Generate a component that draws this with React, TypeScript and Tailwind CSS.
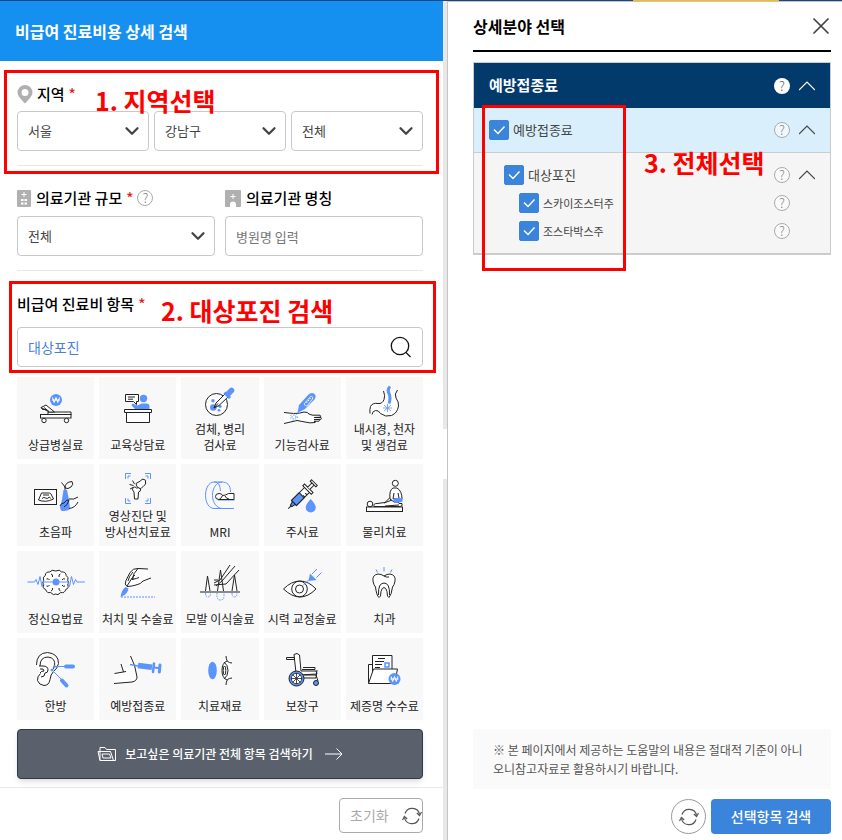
import React from "react";
import { ChevronDown, X } from "lucide-react";

const BLUE = "#5b93ff";

const NOTICE =
  "※ 본 페이지에서 제공하는 도움말의 내용은 절대적 기준이 아니오니참고자료로 활용하시기 바랍니다.";

const Won = ({ x, y }: { x: number; y: number }) => (
  <>
    <circle cx={x} cy={y} r="6" fill={BLUE} stroke="none" />
    <path
      d={`M${x - 3.5} ${y - 2.5}l1.700 5 1.800-5 1.800 5 1.700-5M${x - 4} ${y}h8`}
      stroke="#fff"
      strokeWidth="1"
    />
  </>
);

const items: { lines: string[]; icon: React.ReactNode }[] = [
  {
    lines: ["상급병실료"],
    icon: (
      <>
        <Won x={39} y={23} />
        <path d="M31 35h23v3H31z" fill="#fff" />
        <rect x="23.5" y="37.5" width="30.5" height="3.5" fill="#fff" />
        <path d="M24 30.5l5-2.5 8.500 7H32z" fill="#fff" />
        <path d="M24 30.500l1.500 2H30M27 30.500l5 4" />
        <circle cx="27" cy="43.5" r="2.200" fill="#fff" />
        <circle cx="49.5" cy="43.5" r="2.200" fill="#fff" />
      </>
    ),
  },
  {
    lines: ["교육상담료"],
    icon: (
      <>
        <path d="M26.5 17.5h13v7h-2v3l-3-3h-8z" fill="#fff" />
        <path d="M29 20h7M29 22.200h5" />
        <g fill={BLUE} stroke="none">
          <circle cx="44.5" cy="21.5" r="3.700" />
          <path d="M32.5 28l1-1.500 5 2 4-2h5q3 0 3 3v3.500H37l-3-3z" />
        </g>
        <path d="M25.5 32.500h27v3h-27zM27.5 35.500h23v10h-23z" fill="#fff" />
      </>
    ),
  },
  {
    lines: ["검체, 병리", "검사료"],
    icon: (
      <>
        <circle cx="35.5" cy="27.5" r="11" fill="#fff" />
        <g fill={BLUE} stroke="none">
          <circle cx="32" cy="23.7" r="1.700" />
          <circle cx="32.3" cy="30.5" r="3.300" />
          <circle cx="39" cy="29.3" r="1.600" />
          <circle cx="38" cy="33.3" r="1.400" />
        </g>
        <path d="M33 31l2-5 9.500-9.500 3 3L38 28.500z" fill="#fff" />
        <path d="M33 31l4-4.500" />
        <path d="M43.5 15.500l5.500 5.500" stroke={BLUE} strokeWidth="3" />
        <path d="M47 17l3.500-3.500" stroke={BLUE} strokeWidth="5.500" strokeLinecap="round" />
      </>
    ),
  },
  {
    lines: ["기능검사료"],
    icon: (
      <>
        <path d="M20 35.500l17 .5 7-1 5 3.500h7q1.500 1 0 2l-1 1.500 1 1-2 2-9 1.500-6-2-7-1-12 2.500z" fill="#fff" stroke="none" />
        <path d="M20 35.500l10 1q6 0 10-1.500 4 0 5 2 2 1 4 1.200h7q1.500 1 0 2l-6 .3h7q1 1 0 1.800l-7 .2h5q1 1 0 1.700h-5q3 .5 1 1.300-5 1-10-.5l-8-1.500-13 3" />
        <path d="M33.5 36l1.500-8 9-10q3-3 6-1.500 3 2 .5 6L41 32z" fill={BLUE} stroke="none" />
        <path d="M40.500 26.500l6-7q1.500-.5 2 .5t0 2l-5 6.500q-1 .5-2.200 0t-.8-2z" stroke="#fff" strokeWidth=".8" />
        <path d="M42.500 26l4.500-5.500" stroke="#fff" strokeWidth="1" strokeDasharray="1.500 1" />
        <circle cx="30" cy="40" r="2" stroke={BLUE} strokeDasharray="1.500 1" />
        <circle cx="30" cy="40" r="3.500" stroke={BLUE} strokeDasharray="1 2" />
      </>
    ),
  },
  {
    lines: ["내시경, 천자", "및 생검료"],
    icon: (
      <>
        <path d="M38 14.500q1.500 5 0 8.500-1.500 4-6 4-6-1-7.500 3-1 3-.5 7h4q0-4 4-3.500 2 0 3 3 5 5 11 2 6-3 6.500-10 0-4-2-7.500-3-4 1.500-9" fill="#fff" stroke="none" />
        <path d="M37.5 14q2 5 .5 8.500-1.500 4.500-6 4-5.500-1-7.500 3-1 3-.5 7M51.500 13q-3.500 4-1.500 8 3 4 2.500 8-1 7-7 9.500-6 2-11-2-2-3.500-5-3t-3.500 4" />
        <path d="M44 9.500q-3 3-1 7 2 4 0 10" stroke={BLUE} strokeWidth="3" />
        <path d="M41.500 27v8M38 28l7 6M45 28l-7 6M37 31h9" stroke={BLUE} strokeWidth=".8" />
      </>
    ),
  },
  {
    lines: ["초음파"],
    icon: (
      <>
        <rect x="17.5" y="25.5" width="22" height="15" fill="#fff" />
        <path d="M24.5 29h8q1 0 1.500 1l2.500 5q-8 4-15 1zM25 34.500q2-2 3.500-.5t4-1l1 1.500M26 31h6" />
        <path d="M46.500 26h3.500l2 10 1 9q-4 3-9 1.500l-1-3 2-8z" fill={BLUE} stroke="none" />
        <path d="M48 26v-3q-3-4-3.500-4.500M48 24q0-6 7-6.500 2 3-1 5.500t-6 1" />
        <path d="M61 33q-4 3-9 2M61 38q-3 6-9 6.500M43 42q1-3 4-3 3-4 5-3-1 5-5 7" />
      </>
    ),
  },
  {
    lines: ["영상진단 및", "방사선치료료"],
    icon: (
      <>
        <path d="M26.5 15V9.500H32M46 9.500h5.500V15M26.500 34v5.500H32M46 39.500h5.500V34M29 14.500v-2.500h2.500M46.500 12H49v2.500M29 34.500V37h2.500M46.500 37H49v-2.500" stroke={BLUE} />
        <path d="M37 19.500l4.500-2.500q1.500-3 3.500-1.500 2.500.500 1.500 2.500 1 2.500-1.500 3.500l-3 3q-4 .5-5-5z" fill="#fff" />
        <path d="M34 23.500q2-1.500 3.500.5 2.500-1 4 1 .5 2.500-2 3l-.5 7h-3.500l-.5-7q-2.500-2-1-4.500z" fill="#fff" />
        <path d="M30.500 20.500l4 1M33.500 16.500l2 3.500M31 25l3-1.500" />
      </>
    ),
  },
  {
    lines: ["MRI"],
    icon: (
      <>
        <path d="M53 44.500H33c-5 0-8.500-6-8.500-13.200S28 18 33 18h8c5 0 8.500 3 8.500 10M41 18c-5.500 0-9.500 6-9.500 13.300S36 44.500 41 44.500M33 18c5 0 6 4 6.500 9M37 36h16.500" stroke={BLUE} />
        <path d="M53 29.500v6H38q-3.500 0-3.500-3t3.500-3q3 0 3.500 2l3-.5 3-1.500z" fill="#fff" />
        <path d="M41.500 31.500q-1 3-3 3.500M44 32q1 2.500 4 3" />
      </>
    ),
  },
  {
    lines: ["주사료"],
    icon: (
      <>
        <g transform="translate(37 32) rotate(45)">
          <path d="M0 10v8" />
          <rect x="-3.5" y="-9" width="7" height="19" fill="#fff" />
          <rect x="-3.5" y="-1" width="7" height="11" fill={BLUE} />
          <path d="M-2 10h4l-1 4h-2z" fill={BLUE} />
          <rect x="-6" y="-11" width="12" height="2.500" fill="#fff" />
          <path d="M-1.500-11v-6h3v6M-4-19h8v2h-8z" fill="#fff" />
          <path d="M1-5h2.500M1-2h2.500" />
        </g>
        <path d="M46.700 35q5 5.500 5 8.500a5 5 0 0 1-10 0q0-3 5-8.500z" fill={BLUE} stroke="none" />
      </>
    ),
  },
  {
    lines: ["물리치료"],
    icon: (
      <>
        <rect x="20.5" y="43" width="36" height="4.500" fill="#fff" />
        <path d="M28 42.500q-1-3 3-3l8-1 5-5h5l4 6h3q1 3-2 3z" fill="#fff" />
        <circle cx="24" cy="40" r="2.800" fill="#fff" />
        <path d="M44 35q-1-9 3-11h4q5 3 5 11l-3 3h-5z" fill="#fff" />
        <path d="M47 34h9.500v3.500q-4 2-9 0z" fill={BLUE} stroke="none" />
        <path d="M47 35l1-6M52 29l1 5M38 39l8-3M39 42l14-1" />
        <circle cx="49.3" cy="19.3" r="3" fill="#fff" />
      </>
    ),
  },
  {
    lines: ["정신요법료"],
    icon: (
      <>
        <path d="M38.700 20q-4-2-6 1-4-.5-4.500 3.500-3 2-1.500 5-2 2 0 4-1.500 4 2 5 1 4 5 3 3 3.500 5 1.500 2 2 5-1.500 4 1 5-3 3.500-1 2-5 2-2 0-4 1.500-3-1.500-5-.5-4-4.500-3.500-2-3-6-1z" fill="#fff" />
        <path d="M34 23q2 0 1.500 3M43.500 23q-2 0-1.500 3M34 40q2-.5 1.500-3M43.500 40q-2-.5-1.500-3M29.500 28q2-1 3 1M48 28q-2-1-3 1M29.500 35q2 1 3-1M48 35q-2 1-3-1" />
        <path d="M10.500 31h7l1.500-2.500 2 5 2-8 2 10 1.500-4.500h24.500l1.500 4.500 2-10 2 8 2-5 1.500 2.500H68" stroke={BLUE} />
        <circle cx="39" cy="31" r="3.500" fill={BLUE} stroke="none" />
      </>
    ),
  },
  {
    lines: ["처치 및 수술료"],
    icon: (
      <>
        <path d="M29 35q-3 0-3-4l5-9q3-4 6-4l12 2 3 9-9 2q-3 4-9 4.500z" fill="#fff" stroke="none" />
        <path d="M49 18l-10-.5q-5-.5-8 4l-4 8q-2 4 1 6 4 0 9-1.500 5-1 7-4l8-3M39 17.500q-5 5-6 11 5-1 7-2M34 21q-4 4-5 9M36 24q-3 1-2 5M28 35l5-8" />
        <path d="M21.500 46q1-7 5-10l3 1.500q-1 5-5 7z" fill={BLUE} stroke="none" />
        <path d="M22 46h34" stroke={BLUE} strokeDasharray="2 1" />
      </>
    ),
  },
  {
    lines: ["모발 이식술료"],
    icon: (
      <>
        <path d="M24.500 40l2-15 2.500 15M36.500 40l3-21 3 21M51 40l2.500-16 2.500 16" fill="#fff" />
        <path d="M49 14L39 29l-6 3M54 15L41 30l-6 5M58 19L45 33l-12 1M33 29h4" />
        <path d="M19 41h40" stroke="#666" strokeWidth="1.500" />
        <path d="M24.500 42q0 4 2.500 4t2.500-4M36 42v3q0 4 3.500 4t3.500-4v-3M51 42q0 4 2.500 4t2.500-4" stroke={BLUE} strokeDasharray="1.500 1" />
      </>
    ),
  },
  {
    lines: ["시력 교정술료"],
    icon: (
      <>
        <path d="M19.500 38q8-8 16.500-8t16 8q-8 8-16 8t-16.500-8z" fill="#fff" />
        <circle cx="35.5" cy="38" r="7.800" />
        <circle cx="35.5" cy="38" r="4" />
        <path d="M39 34.500l6-6M48 23l5-5M52.500 26.500l5-5" stroke={BLUE} />
        <path d="M46 22.500l6.500 6.500-8 1z" fill={BLUE} stroke="none" />
      </>
    ),
  },
  {
    lines: ["치과"],
    icon: (
      <>
        <path d="M38 25q3-2 6-2 6 1 5 7-.5 4-2.500 6-1 8-3.500 10.500-2 0-2-6-1-4-3-4t-3 4q0 6-2 6-2.500-2-3.500-10.500-2-2-2.500-6-1-6 5-7 3 0 6 2z" fill="#fff" />
        <path d="M38 25q2 1.500 5 1M32.500 44q-.5-12 5.500-12t5.500 12" />
        <path d="M38 16v4.500M30 18.500l1.500 3M46 18.500l-1.500 3" stroke={BLUE} />
      </>
    ),
  },
  {
    lines: ["한방"],
    icon: (
      <>
        <path d="M19.500 27q0-12 11-12.500 11 1 11 11-1 5-5 8-3 3-3.500 8-1 6-6 6-5-.5-6.500-5-.5-4 3-7" fill="#fff" />
        <path d="M23 28q0-9 8-9 8 1 6.500 9-1 3-3 5M22 28h4q5 0 5 4 0 3-3 3 0 4-4 4M23 31q4-1 4 2-3 0-4 2" />
        <g stroke={BLUE} fill={BLUE}>
          <circle cx="37.5" cy="28.5" r="1" />
          <circle cx="35" cy="32" r="1" />
          <path d="M38 28.500h10M35 32l9 9" />
          <path d="M49 28.500h7" strokeWidth="4" strokeLinecap="round" />
          <path d="M45 42.500l4.500 5" strokeWidth="4" strokeLinecap="round" />
        </g>
      </>
    ),
  },
  {
    lines: ["예방접종료"],
    icon: (
      <>
        <path d="M31.500 18q5 9 6.500 21 0 4-5 5l-18 1.500V36l12-2z" fill="#fff" stroke="none" />
        <path d="M31.500 18q5 9 6.500 21 0 4-5 5l-18 1.500M15.500 35.500l11.500-2M22 26l2.500 8" />
        <g stroke={BLUE}>
          <path d="M31 26.500l8 1.500" strokeWidth="1.500" />
          <path d="M39 27.500l14 1.800" strokeWidth="5.500" />
          <path d="M55 25.500l-1 8.500" strokeWidth="2.500" strokeLinecap="round" />
          <path d="M55 29.500l6 .7" strokeWidth="2" />
          <path d="M61 27l-.7 7" strokeWidth="3" strokeLinecap="round" />
        </g>
      </>
    ),
  },
  {
    lines: ["치료재료"],
    icon: (
      <>
        <ellipse cx="31.5" cy="32.5" rx="4.300" ry="8.700" fill={BLUE} stroke="none" />
        <path d="M45 18q0 3 1.500 5.500 2 1 4 1.500v15q-3 0-4 2-1.500 3-1.500 4.500-2-7-4-13 1-9 4-15.500z" fill="#fff" stroke="none" />
        <path d="M45 18q0 3 1.500 5.500 2 1.500 4.500 1.500M45 47q0-3 1.500-5.500 2-1.500 4.500-1.500M46 23q-5 2-5 9.500t5 9.500M43 24q4 3 4 8.500t-4 8.500" />
        <ellipse cx="43.5" cy="32.5" rx="1.300" ry="4.500" />
      </>
    ),
  },
  {
    lines: ["보장구"],
    icon: (
      <>
        <path d="M30 16.500l3-1 2.500 1.500 1.500 16h15l1 3-18 1-3-2z" fill="#fff" />
        <path d="M22.500 19.500h8v2h-8zM39 29.500h12v2H38M36 40h16l1-8M40 37h12l2 6" />
        <circle cx="32.5" cy="40.5" r="7.500" fill={BLUE} />
        <circle cx="32.5" cy="40.5" r="5.200" fill="#fff" strokeWidth=".8" />
        <path d="M32.500 35v11M27 40.500h11M28.500 36.500l8 8M36.500 36.500l-8 8" strokeWidth=".8" />
        <circle cx="52" cy="45" r="2.500" fill={BLUE} />
      </>
    ),
  },
  {
    lines: ["제증명 수수료"],
    icon: (
      <>
        <path d="M22.500 45.500v-19h4v-9H46v14M26.500 26v10" fill="#fff" />
        <path d="M32 20.500h7M29 23.500h9M29 26.500h7M29 29.500h5" />
        <path d="M22.500 45.500l5-14.500h24l-3 14.500z" fill="#fff" />
        <rect x="39" y="25" width="4" height="4" stroke={BLUE} strokeWidth="1.500" />
        <Won x={48.5} y={41} />
      </>
    ),
  },
];

const Help = ({ solid }: { solid?: boolean }) => (
  <button
    type="button"
    aria-label="도움말"
    className={
      solid
        ? "grid size-4 shrink-0 place-items-center rounded-full bg-white text-[13px] leading-4 font-light text-[#666]"
        : "grid size-4 shrink-0 place-items-center rounded-full border border-[#aaa] bg-white/60 text-[13px] leading-3 font-light text-[#888]"
    }
  >
    ?
  </button>
);

const Refresh = () => (
  <svg viewBox="0 0 20 20" className="size-5 shrink-0" fill="none" stroke="#555" strokeWidth="1.200">
    <path d="M3 7.500a7.500 7.500 0 0 1 14.500 1M17 12.500a7.500 7.500 0 0 1-14.500-1" />
    <path d="M14.800 7l2.800 2.500L19.500 6M5.200 13l-2.800-2.500L.5 14" />
  </svg>
);

const Select = ({ id, label, value }: { id: string; label: string; value: string }) => (
  <div className="relative min-w-0">
    <select
      id={id}
      aria-label={label}
      defaultValue={value}
      className="h-10 w-full appearance-none rounded border border-[#c8c8c8] bg-white px-[10px] text-[13px] text-[#444]"
    >
      <option>{value}</option>
    </select>
    <ChevronDown
      className="pointer-events-none absolute top-[9px] right-[6px] size-[22px] text-[#444]"
      strokeWidth={2.5}
    />
  </div>
);

const Check = ({ id, label, small }: { id: string; label: string; small?: boolean }) => (
  <div className="flex flex-1 items-center gap-1">
    <span className="grid size-5 shrink-0">
      <input
        id={id}
        type="checkbox"
        defaultChecked
        className="peer size-5 appearance-none rounded-xs border border-[#c8c8c8] bg-white [grid-area:1/1] checked:border-[#3a84dc] checked:bg-[#3a84dc]"
      />
      <svg
        viewBox="0 0 20 20"
        className="pointer-events-none invisible size-5 [grid-area:1/1] peer-checked:visible"
        fill="none"
        stroke="#fff"
        strokeWidth="1.500"
      >
        <path d="M5 9.500l4 4 6.500-7" />
      </svg>
    </span>
    <label htmlFor={id} className={small ? "text-[11px] text-[#444]" : "text-[13px] text-[#444]"}>
      {label}
    </label>
  </div>
);

const Fold = ({ light }: { light?: boolean }) => (
  <button type="button" aria-label="접기" className={light ? "text-white" : "text-[#444]"}>
    <svg viewBox="0 0 16 16" className="size-4" fill="none" stroke="currentColor" strokeWidth="1.200">
      <path d="M0 12l8-8 8 8" />
    </svg>
  </button>
);

const Star = () => <span className="ml-1 text-[#e02020]">*</span>;

const Mark = ({ className }: { className: string }) => (
  <div className={"pointer-events-none absolute border-3 border-[#ff0000] " + className} />
);

function SearchPanel() {
  return (
    <div className="flex min-w-0 border-r border-[#c4c4c4]">
      <div className="flex min-w-0 flex-1 flex-col">
        <header className="flex h-[60px] items-center bg-[#1590f0] px-[15px]">
          <h1 className="text-[16px] font-bold text-white">비급여 진료비용 상세 검색</h1>
        </header>

        <form className="flex flex-1 flex-col" onSubmit={(e) => e.preventDefault()}>
          <div className="pr-5 pl-[17px]">
            <section className="relative border-b border-[#e8e8e8] pt-[21px] pb-[14px]">
              <div className="mb-[5px] flex h-6 items-center text-[15px] font-medium text-black">
                <svg viewBox="0 0 16 20" className="mr-1 h-5 w-4" fill="#b0b0b0" fillRule="evenodd">
                  <path d="M8 1a7.500 7.500 0 0 1 7.500 7.500C15.500 12 12 15 8 19.500 4 15 .5 12 .5 8.500A7.500 7.500 0 0 1 8 1zm0 4a3.500 3.500 0 1 0 0 7 3.500 3.500 0 0 0 0-7z" />
                </svg>
                <label htmlFor="sido">지역</label>
                <Star />
              </div>
              <div className="grid grid-cols-3 gap-[5px]">
                <Select id="sido" label="시도" value="서울" />
                <Select id="sigungu" label="시군구" value="강남구" />
                <Select id="dong" label="읍면동" value="전체" />
              </div>
              <Mark className="top-[9px] -right-4 -bottom-[9px] -left-[13px]" />
              <span className="pointer-events-none absolute top-5 left-[78px] text-[25px] leading-[38px] font-bold text-[#ff0000]">
                1. 지역선택
              </span>
            </section>

            <section className="grid grid-cols-2 gap-[10px] border-b border-[#e8e8e8] pt-5 pb-[14px]">
              <div>
                <div className="mb-[6px] flex h-6 items-center text-[15px] font-medium text-black">
                  <svg viewBox="0 0 14 17" className="mr-[5px] h-[17px] w-[14px]">
                    <rect width="14" height="17" rx="1" fill="#b0b0b0" />
                    <path d="M7 2v5M4.500 4.500h5" stroke="#fff" />
                    <path d="M4 9h2.500v2H4zM7.500 9H10v2H7.500zM4 12.500h2.500v2H4zM7.500 12.500H10v2H7.500z" fill="#fff" />
                  </svg>
                  <label htmlFor="size">의료기관 규모</label>
                  <Star />
                  <span className="ml-1 flex">
                    <Help />
                  </span>
                </div>
                <Select id="size" label="의료기관 규모" value="전체" />
              </div>
              <div>
                <div className="mb-[6px] flex h-6 items-center text-[15px] font-medium text-black">
                  <svg viewBox="0 0 16 17" className="mr-[5px] h-[17px] w-4">
                    <rect width="16" height="17" rx="1" fill="#b0b0b0" />
                    <path d="M8 4v5M5.500 6.500h5" stroke="#fff" />
                    <path d="M5 17v-2.500a3 3 0 0 1 6 0V17z" fill="#fff" />
                  </svg>
                  <label htmlFor="name">의료기관 명칭</label>
                </div>
                <input
                  id="name"
                  placeholder="병원명 입력"
                  className="h-10 w-full rounded border border-[#c8c8c8] px-[10px] text-[13px] placeholder:text-[#757575]"
                />
              </div>
            </section>

            <section className="relative pt-[21px]">
              <div className="mb-[11px] flex h-6 items-center text-[15px] font-medium text-black">
                <label htmlFor="item">비급여 진료비 항목</label>
                <Star />
              </div>
              <div className="flex h-10 items-center rounded border border-[#c8c8c8] px-[10px]">
                <input
                  id="item"
                  defaultValue="대상포진"
                  className="min-w-0 flex-1 text-[14px] text-[#4a7fdc] outline-none"
                />
                <button type="button" aria-label="검색">
                  <svg viewBox="0 0 22 22" className="size-[22px]" fill="none" stroke="#111" strokeWidth="1.300">
                    <circle cx="10" cy="10" r="8.700" />
                    <path d="M16 16.500l4.500 4.500" />
                  </svg>
                </button>
              </div>
              <Mark className="top-[10px] -right-[13px] -bottom-[6px] -left-2" />
              <span className="pointer-events-none absolute top-5 left-36 text-[25px] leading-[38px] font-bold text-[#ff0000]">
                2. 대상포진 검색
              </span>
            </section>

            <div className="mt-[10px] grid grid-cols-5 gap-[5px]">
              {items.map((item) => {
                return (
                  <button
                    type="button"
                    key={item.lines.join(" ")}
                    className="grid h-[82px] min-w-0 justify-items-center bg-[#f8f8f8]"
                  >
                    <svg
                      viewBox="0 0 77 52"
                      className="h-[52px] w-[77px] self-start [grid-area:1/1]"
                      fill="none"
                      stroke="#222"
                      strokeWidth="1"
                    >
                      {item.icon}
                    </svg>
                    <span className="self-end pb-[6px] text-[12px] leading-4 whitespace-nowrap text-[#222] [grid-area:1/1]">
                      {item.lines.map((line) => (
                        <span key={line} className="block">
                          {line}
                        </span>
                      ))}
                    </span>
                  </button>
                );
              })}
            </div>

            <button
              type="button"
              className="mt-[9px] flex h-[50px] w-full items-center justify-center gap-2 rounded border border-[#2f3b49] bg-[#5a616c] text-[12px] font-medium text-white shadow-md"
            >
              <svg viewBox="0 0 20 16" className="h-4 w-5" fill="none" stroke="#fff">
                <path d="M3 14.500V1.500h5l1.500 2h9v11H3L1 5.500h12.500l3 9M5 8h7.500l1.500 4H6z" />
              </svg>
              보고싶은 의료기관 전체 항목 검색하기
              <svg viewBox="0 0 18 12" className="ml-1 h-3 w-[18px]" fill="none" stroke="#fff">
                <path d="M0 6h17M11.500 .5L17 6l-5.500 5.500" />
              </svg>
            </button>
          </div>

          <footer className="mt-2 flex flex-1 items-start justify-end border-t border-[#e8e8e8] pt-[10px] pr-5 pb-[7px]">
            <button
              type="reset"
              className="flex h-[35px] w-[84px] items-center justify-between rounded border border-[#aaa] pl-[10px] text-[14px] text-[#aaa]"
            >
              초기화
              <Refresh />
            </button>
          </footer>
        </form>
      </div>
      {/* thin scroll track */}
      <div className="w-1 bg-[#e8e8e8] pt-[428px]">
        <div className="h-[50px] bg-white" />
      </div>
    </div>
  );
}

function DetailPanel() {
  return (
    <div className="flex min-w-0 flex-col border-t border-[#c4c4c4] pr-[11px] pb-[6px] pl-[25px]">
      <header className="flex h-[50px] items-center justify-between border-b-2 border-black">
        <h2 className="text-[16px] font-bold text-black">상세분야 선택</h2>
        <button type="button" aria-label="닫기" className="-mr-1">
          <X className="size-7 text-[#444]" strokeWidth={1.5} />
        </button>
      </header>

      <div className="relative mt-[10px] border border-b-2 border-[#ccc]">
        <div className="flex h-[45px] items-center gap-[9px] bg-[#033a6c] px-[15px]">
          <h3 className="flex-1 text-[15px] font-bold text-white">예방접종료</h3>
          <Help solid />
          <Fold light />
        </div>
        <div className="flex h-[45px] items-center gap-[9px] border-b border-[#ccc] bg-[#d9effc] px-[15px]">
          <Check id="vaccine" label="예방접종료" />
          <Help />
          <Fold />
        </div>
        <div className="bg-[#f5f5f5] py-2">
          <div className="flex h-7 items-center gap-[9px] pr-[15px] pl-[30px]">
            <Check id="zoster" label="대상포진" />
            <Help />
            <Fold />
          </div>
          <div className="flex h-7 items-center pr-10 pl-[45px]">
            <Check id="sky" label="스카이조스터주" small />
            <Help />
          </div>
          <div className="flex h-7 items-center pr-10 pl-[45px]">
            <Check id="zostavax" label="조스타박스주" small />
            <Help />
          </div>
        </div>
        <Mark className="top-[42px] -bottom-[18px] left-2 w-36" />
        <span className="pointer-events-none absolute top-20 left-[170px] text-[25px] leading-[38px] font-bold text-[#ff0000]">
          3. 전체선택
        </span>
      </div>

      <p className="mt-auto bg-[#fafafa] px-5 py-[11px] text-[12px] leading-[19px] break-all text-[#555]">
        {NOTICE}
      </p>
      <div className="mt-[10px] flex justify-end gap-[5px]">
        <button
          type="button"
          aria-label="초기화"
          className="grid size-[35px] place-items-center rounded-full border border-[#999]"
        >
          <Refresh />
        </button>
        <button type="button" className="h-[35px] w-[120px] rounded bg-[#3a84dc] text-[14px] font-medium text-white">
          선택항목 검색
        </button>
      </div>
    </div>
  );
}

export default function App() {
  return (
    <div className="flex min-h-screen flex-col bg-white font-['Noto_Sans_CJK_KR',sans-serif]">
      <div className="grid h-px grid-cols-[633fr_146fr_63fr] bg-[#15497f]">
        <div className="col-start-2 bg-[#fdb913]" />
      </div>
      <main className="grid flex-1 grid-cols-[448fr_394fr]">
        <SearchPanel />
        <DetailPanel />
      </main>
    </div>
  );
}
